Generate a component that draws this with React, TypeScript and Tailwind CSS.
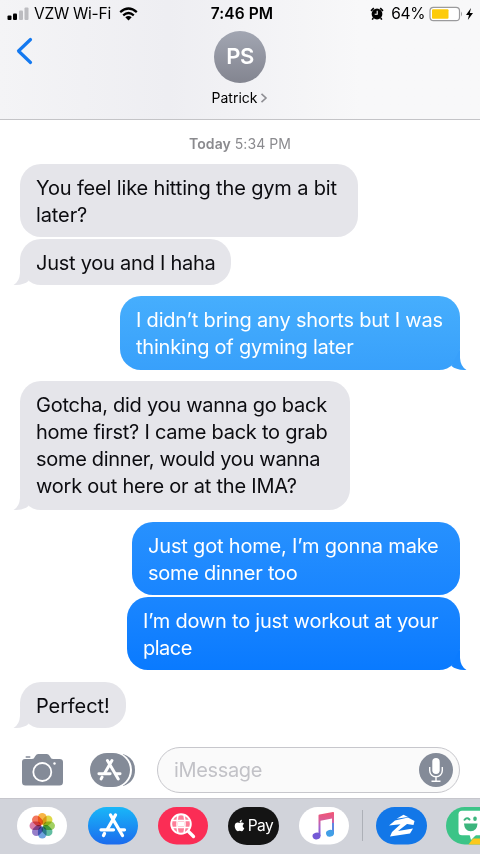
import { FaApple } from "react-icons/fa";

type Line = { text: string; cls: string };

function Tail({ side, color }: { side: "left" | "right"; color: string }) {
  return (
    <svg
      className={side === "right" ? "absolute -right-[7px] bottom-0" : "absolute -left-[7px] bottom-0 -scale-x-100"}
      width="27" height="24" viewBox="0 0 27 24" fill={color}
    >
      <path d="M20 3V12Q20.500 20.500 26.500 24Q16.500 24.300 11.500 20Z" />
    </svg>
  );
}

function Bubble({ lines, side, fill, tail, cls }: { lines: Line[]; side: "left" | "right"; fill: string; tail?: string; cls: string }) {
  return (
    <div className={`relative rounded-[21px] px-4 pt-[10.500px] text-[20px] leading-[27.3px] whitespace-nowrap ${side === "right" ? "self-end text-white" : "self-start text-[#0c0c10]"} ${fill} ${cls}`}>
      {tail && <Tail side={side} color={tail} />}
      {lines.map((l) => (
        <div key={l.text} className={`relative ${l.cls}`}>{l.text}</div>
      ))}
    </div>
  );
}

function StoreGlyph() {
  return (
    <g stroke="white" strokeWidth="3.300" strokeLinecap="round" fill="none">
      <path d="M22.500 8L34.500 28.500M27.500 8L19.500 22M16.500 26.500L15.500 28.500" />
      <path d="M13 22.800H25.500M31.500 22.800H36.500" />
    </g>
  );
}

const petals = ["#f7a51c", "#d8d01e", "#8dc63f", "#3fae8c", "#4f8fd8", "#8063bd", "#cf5f94", "#f05a3c"];

export default function App() {
  return (
    <div className="flex h-[854px] w-[480px] flex-col overflow-hidden bg-white font-['Inter','Liberation_Sans',sans-serif]">
      <header className="flex h-[120px] shrink-0 flex-col border-b border-[#c4c4c7] bg-linear-to-r from-[#f4f4f6] via-[#eeeef2] via-35% to-[#f8f8f9] to-75%">
        <div className="grid h-[27px] grid-cols-[1fr_auto_1fr] items-center pr-[5px] pl-[7px] text-black">
          <div className="flex items-center">
            <svg width="22" height="14" viewBox="0 0 22 14">
              <rect x=".5" y="8.500" width="4" height="4.500" rx="1" />
              <rect x="6" y="6.500" width="4" height="6.500" rx="1" />
              <rect x="12" y="3.500" width="4" height="9.500" rx="1" fill="#bcbcc0" />
              <rect x="17.500" y=".5" width="4" height="12.500" rx="1" fill="#bcbcc0" />
            </svg>
            <span className="ml-[5px] text-[15.5px] tracking-[-0.25px]">VZW Wi-Fi</span>
            <svg className="ml-[8.500px]" width="19" height="14" viewBox="0 0 19 14" fill="none" stroke="black" strokeWidth="2.300">
              <path d="M1.200 5.100Q9.500 -2 17.800 5.100M4.200 8.300Q9.500 3.800 14.800 8.300" />
              <path d="M6.300 10.300Q9.500 7.700 12.700 10.300L9.500 13.500Z" fill="black" stroke="none" />
            </svg>
          </div>
          <span className="ml-[2px] text-[15.5px] font-semibold tracking-[0.1px]">7:46 PM</span>
          <div className="flex items-center justify-end">
            <svg width="14" height="14" viewBox="0 0 14 14">
              <circle cx="7" cy="7" r="5.400" />
              <path d="M1 3.800L3.800 1.200M10.200 1.200L13 3.800M3.300 11L2.200 12.600M10.700 11L11.800 12.600" stroke="black" strokeWidth="1.600" />
              <path d="M7.200 3.800V7.300H4.700" stroke="white" strokeWidth="1.100" fill="none" />
            </svg>
            <span className="ml-[7px] text-[15.5px] tracking-[-0.4px]">64%</span>
            <svg className="ml-[4px]" width="46" height="16" viewBox="0 0 46 16">
              <rect x="1" y="1.300" width="29.500" height="13.400" rx="3.500" fill="white" stroke="#9b9b9d" strokeWidth="1.200" />
              <rect x="3" y="3.200" width="16.500" height="9.600" rx="1" fill="#fdcb0a" />
              <path d="M32 5.500Q34 8 32 10.500Z" fill="#9b9b9d" />
              <path d="M42 2L37 9H40L38.800 14L44 7H40.800Z" />
            </svg>
          </div>
        </div>
        <div className="grid grid-cols-[1fr_auto_1fr] px-4">
          <svg className="mt-[10px]" width="18" height="28" viewBox="0 0 18 28" fill="none" stroke="#1479f0" strokeWidth="3.200" strokeLinecap="round" strokeLinejoin="round">
            <path d="M14.500 2.500L2.500 14L14.500 25.500" />
          </svg>
          <div className="flex flex-col items-center">
            <div className="mt-[3.500px] flex size-[52px] items-center justify-center rounded-full bg-linear-to-b from-[#a2a6b2] to-[#838590] text-[22px] font-semibold tracking-[-0.5px] text-white">PS</div>
            <div className="mt-[5px] flex items-center text-[14px] leading-5 text-black">
              Patrick
              <svg className="ml-[3px]" width="8" height="10" viewBox="0 0 8 10" fill="none" stroke="#8e8e93" strokeWidth="1.600"><path d="M1.500 .8L6 5L1.500 9.200" /></svg>
            </div>
          </div>
          <div />
        </div>
      </header>

      <main className="flex h-[622px] shrink-0 flex-col px-5">
        <div className="mt-[15px] h-[29px] text-center text-[14px] leading-[18px] tracking-[0.05px] text-[#8a8a8e]"><b className="font-semibold">Today</b> 5:34 PM</div>
        <Bubble side="left" fill="bg-[#e5e5ea]" cls="h-[73px] w-[338px]" lines={[{ text: "You feel like hitting the gym a bit", cls: "tracking-[-0.15px]" }, { text: "later?", cls: "tracking-[-0.1px]" }]} />
        <Bubble side="left" fill="bg-[#e5e5ea]" tail="#e5e5ea" cls="mt-[2px] h-[46px] w-[211px]" lines={[{ text: "Just you and I haha", cls: "tracking-[-0.25px]" }]} />
        <Bubble side="right" fill="bg-linear-to-b from-[#46aefd] to-[#38a0fb]" tail="#38a0fb" cls="mt-[11px] h-[74px] w-[340px]" lines={[{ text: "I didn’t bring any shorts but I was", cls: "tracking-[-0.2px]" }, { text: "thinking of gyming later", cls: "tracking-[-0.22px]" }]} />
        <Bubble side="left" fill="bg-[#e5e5ea]" tail="#e5e5ea" cls="mt-[11px] h-[129px] w-[330px]" lines={[{ text: "Gotcha, did you wanna go back", cls: "tracking-[-0.26px]" }, { text: "home first? I came back to grab", cls: "tracking-[-0.24px]" }, { text: "some dinner, would you wanna", cls: "tracking-[-0.3px]" }, { text: "work out here or at the IMA?", cls: "tracking-[-0.22px]" }]} />
        <Bubble side="right" fill="bg-linear-to-b from-[#2791fe] to-[#1985ff]" cls="mt-[12px] h-[73px] w-[328px]" lines={[{ text: "Just got home, I’m gonna make", cls: "tracking-[-0.18px]" }, { text: "some dinner too", cls: "tracking-[-0.25px]" }]} />
        <Bubble side="right" fill="bg-linear-to-b from-[#1a86ff] to-[#097aff]" tail="#0b7bff" cls="mt-[2px] h-[73px] w-[333px]" lines={[{ text: "I’m down to just workout at your", cls: "tracking-[-0.22px]" }, { text: "place", cls: "tracking-[-0.5px]" }]} />
        <Bubble side="left" fill="bg-[#e5e5ea]" tail="#e5e5ea" cls="mt-[12px] h-[46px] w-[106px]" lines={[{ text: "Perfect!", cls: "tracking-[-0.1px]" }]} />
      </main>

      <div className="flex h-[56px] shrink-0 items-center pr-[20px] pl-[21px]">
        <svg width="43" height="32" viewBox="0 0 43 32" fill="#848b98">
          <path d="M4 5H11Q13 5 14 2.500Q15 0 17 0H26Q28 0 29 2.500Q30 5 32 5H38.500Q42 5 42 8V28Q42 31.500 38.500 31.500H4.500Q1 31.500 1 28V8Q1 5 4 5Z" />
          <rect x="4.500" y="2.200" width="5" height="1.500" rx=".7" />
          <circle cx="21.300" cy="18" r="9" fill="none" stroke="white" strokeWidth="1.800" />
          <circle cx="33.500" cy="9.500" r="1.200" fill="white" />
        </svg>
        <svg className="ml-[26px]" width="46" height="36" viewBox="0 0 46 36">
          <path d="M33 2Q45 6 45 18Q45 30 33 34Z" fill="#848b98" />
          <rect x="-1" y="0" width="43" height="36" rx="18" fill="white" />
          <rect x="0" y="1" width="40" height="34" rx="17" fill="#848b98" />
          <g transform="translate(-2.800 1.300) scale(.9)"><StoreGlyph /></g>
        </svg>
        <div className="ml-[21px] flex h-[46px] flex-1 items-center justify-between rounded-full border border-[#c7c7cc] bg-[#fafafa] pr-[6px] pl-4">
          <span className="text-[20px] tracking-[-0.35px] text-[#c2c2c7]">iMessage</span>
          <svg width="34" height="34" viewBox="0 0 34 34">
            <circle cx="17" cy="17" r="17" fill="#848b98" />
            <rect x="13.300" y="5" width="7.400" height="16" rx="3.700" fill="white" />
            <path d="M10.700 14V17.500A6.300 6.300 0 0 0 23.300 17.500V14M17 24V28M12.500 28.200H21.500" fill="none" stroke="white" strokeWidth="1.400" />
          </svg>
        </div>
      </div>

      <footer className="flex h-[56px] shrink-0 items-start overflow-hidden border-t border-[#c6c6cc] bg-[#d1d3da] pt-2 pl-[17px]">
        <svg className="shrink-0" width="50" height="38" viewBox="0 0 50 38">
          <rect width="50" height="37.500" rx="18.700" fill="white" />
          {petals.map((c, i) => (
            <rect key={c} x="20.950" y="6" width="8.600" height="11.800" rx="4.300" fill={c} fillOpacity=".82" transform={`rotate(${i * 45} 25.250 18.700)`} className="mix-blend-multiply" />
          ))}
        </svg>
        <svg className="ml-[20.500px] shrink-0" width="50" height="38" viewBox="0 0 50 38">
          <defs><linearGradient id="store" x2="0" y2="1"><stop stopColor="#19b7f8" /><stop offset="1" stopColor="#1b6bee" /></linearGradient></defs>
          <rect width="50" height="37.500" rx="18.700" fill="url(#store)" />
          <StoreGlyph />
        </svg>
        <svg className="ml-[20px] shrink-0" width="50" height="38" viewBox="0 0 50 38">
          <rect width="50" height="37.500" rx="18.700" fill="#fb2d55" />
          <circle cx="23" cy="17" r="9.600" fill="#fd7d98" />
          <g fill="none" stroke="white" strokeWidth="1.500">
            <circle cx="23" cy="17" r="9.800" strokeWidth="1.900" />
            <path d="M13.500 13.500H32.500M13.500 20.500H32.500M20 8Q18 17 20 26M26 8Q28 17 26 26" />
            <rect x="20" y="14.500" width="6" height="5" fill="white" stroke="none" />
            <path d="M30.500 24.500L35.500 29.500" strokeWidth="3.300" strokeLinecap="round" />
          </g>
        </svg>
        <div className="ml-[20px] flex h-[37.500px] w-[51px] shrink-0 items-center justify-center rounded-full bg-[#141414] text-white">
          <FaApple size={13} className="mb-px" />
          <span className="ml-[2px] text-[15.5px] leading-none tracking-[-0.5px]">Pay</span>
        </div>
        <svg className="ml-[20px] shrink-0" width="50" height="38" viewBox="0 0 50 38">
          <defs>
            <linearGradient id="note" x2="0" y2="1"><stop stopColor="#f25472" /><stop offset=".3" stopColor="#dd5d94" /><stop offset=".65" stopColor="#a064d0" /><stop offset="1" stopColor="#7558d8" /></linearGradient>
          </defs>
          <rect width="50" height="37.500" rx="18.700" fill="white" />
          <path d="M19.500 8.500Q19.500 7.700 20.500 7.500L34 5Q35 4.800 35 5.800V26H33V11.500L21.500 13.800V29H19.500Z" fill="url(#note)" />
          <ellipse cx="17.500" cy="29" rx="4" ry="3.400" fill="#7459d6" transform="rotate(-15 17.500 29)" />
          <path d="M33 16H35V26H33Z" fill="#5f85e2" />
          <ellipse cx="31" cy="26.300" rx="4" ry="3.400" fill="#419fe6" transform="rotate(-15 31 26.300)" />
        </svg>
        <div className="mt-[3px] ml-[13px] h-[31px] w-px shrink-0 bg-[#adb0b7]" />
        <svg className="ml-[13px] shrink-0" width="51" height="38" viewBox="0 0 51 38">
          <rect width="51" height="37.500" rx="18.700" fill="#1277e8" />
          <path d="M20.500 11.800L27.500 7.800L32 10Z" fill="white" />
          <path d="M13 18.500L19 13.500L32 10.500L38.500 14L37.500 18L31 17L22 24L37 21.500L34 26.500L14 29.500L16 25L24.500 17.200Z" fill="white" />
        </svg>
        <svg className="ml-[19.500px] shrink-0" width="51" height="38" viewBox="0 0 51 38">
          <rect width="51" height="37.500" rx="18.700" fill="#3cc487" />
          <path d="M22.500 37.500L27 31.500H51V37.500Z" fill="#fbc81c" />
          <rect x="12.500" y="3.700" width="30" height="24.500" rx="3.500" fill="white" />
          <path d="M23.500 27.500H30.500L25 33Z" fill="white" />
          <path d="M18.500 12.800Q21 10 23.500 12.500" fill="none" stroke="#3cb57d" strokeWidth="2" strokeLinecap="round" />
          <ellipse cx="29" cy="11.800" rx="1.800" ry="2.200" fill="#3cb57d" />
          <path d="M18 16.500H31.500Q31 24.300 24.700 24.300Q18.500 24.300 18 16.500Z" fill="#3cb57d" />
        </svg>
      </footer>
    </div>
  );
}
